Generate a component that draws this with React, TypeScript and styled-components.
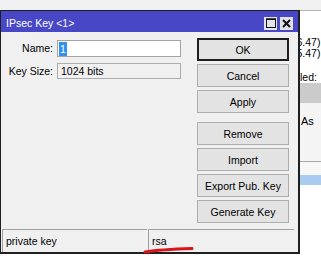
import React from 'react';
import styled, { createGlobalStyle } from 'styled-components';

const GlobalStyle = createGlobalStyle`
  html, body {
    margin: 0;
    padding: 0;
    background: #fff;
  }
  body {
    font-family: "Liberation Sans", Arial, sans-serif;
    font-size: 10.5px;
    color: #000;
  }
`;

const Desktop = styled.div`
  position: relative;
  width: 321px;
  height: 269px;
  overflow: hidden;
  background: #fff;
`;

// The main app behind the dialog, only its right edge shows
const BackApp = styled.div`
  display: flex;
  flex-direction: column;
`;

const BackToolbar = styled.div`
  height: 10px;
  background: #f0f0f0;
  border-bottom: 1px solid #b4b4b4;
`;

const BackLine = styled.div<{ $top?: number; $indent?: number }>`
  height: 11px;
  line-height: 11px;
  margin-top: ${(p) => p.$top ?? 0}px;
  padding-left: ${(p) => p.$indent ?? 293}px;
  white-space: nowrap;
`;

const BackHeader = styled.div`
  height: 20px;
  background: #cbcbcb;
`;

const BackGrid = styled.div`
  height: 59px;
  background: #f4f4f4;
  border-bottom: 1px solid #a8a8a8;
  padding-left: 301px;
  padding-top: 11px;
  box-sizing: border-box;
  line-height: 14px;
  font-size: 11px;
`;

const BackRow = styled.div<{ $selected?: boolean }>`
  height: ${(p) => (p.$selected ? 10 : 13)}px;
  background: ${(p) => (p.$selected ? '#a9cbef' : '#f7f7f7')};
`;

// Dialog window
const Dialog = styled.div`
  position: absolute;
  left: 0;
  top: 10px;
  width: 300px;
  height: 244px;
  box-sizing: border-box;
  border: 1px solid #1f1f1f;
  border-right-width: 2px;
  border-bottom-width: 2px;
  background: #f0f0f0;
  display: flex;
  flex-direction: column;
`;

const TitleBar = styled.div`
  height: 21px;
  box-sizing: border-box;
  padding: 3px 5px 0 5px;
  background: #4848c6;
  color: #fff;
  display: flex;
  align-items: center;
  font-size: 10.5px;
`;

const Title = styled.span`
  flex: 1;
`;

const TitleButtons = styled.div`
  display: flex;
  gap: 3px;
`;

const TitleButton = styled.div`
  width: 13px;
  height: 13px;
  background: #e2e2ea;
  display: flex;
  align-items: center;
  justify-content: center;
`;

const Body = styled.div`
  flex: 1;
  display: flex;
  padding: 6px 9px 0 0;
`;

const Form = styled.div`
  margin-top: 2px;
  display: grid;
  grid-template-columns: 52px 124px;
  grid-template-rows: 17px 16px;
  column-gap: 4px;
  row-gap: 6px;
  align-content: start;
`;

const Label = styled.div`
  text-align: right;
  line-height: 16px;
  white-space: nowrap;
`;

const Field = styled.div<{ $readOnly?: boolean }>`
  box-sizing: border-box;
  border: 1px solid ${(p) => (p.$readOnly ? '#acacac' : '#a3a3a3')};
  background: ${(p) => (p.$readOnly ? '#f0f0f0' : '#fff')};
  padding-left: ${(p) => (p.$readOnly ? 3 : 0)}px;
  display: flex;
  align-items: center;
  white-space: nowrap;
`;

const Selected = styled.span`
  display: inline-block;
  height: 14px;
  line-height: 14px;
  padding: 0 1px;
  margin-left: 1px;
  background: #3092f0;
  color: #fff;
`;

const Buttons = styled.div`
  margin-left: auto;
  width: 92px;
  display: flex;
  flex-direction: column;
  gap: 3px;
`;

const Button = styled.div<{ $default?: boolean; $spaced?: boolean }>`
  height: 23px;
  box-sizing: border-box;
  margin-top: ${(p) => (p.$spaced ? 6 : 0)}px;
  border: ${(p) => (p.$default ? '2px solid #1e1e1e' : '1px solid #adadad')};
  background: #e3e3e3;
  display: flex;
  align-items: center;
  justify-content: center;
  white-space: nowrap;
`;

const StatusBar = styled.div`
  height: 23px;
  display: flex;
  gap: 1px;
  padding: 0 4px 0 1px;
`;

const Pane = styled.div<{ $width?: number }>`
  ${(p) => (p.$width ? `width: ${p.$width}px;` : 'flex: 1;')}
  box-sizing: border-box;
  border-top: 1px solid #a0a0a0;
  border-left: 1px solid #a0a0a0;
  padding-left: 3px;
  display: flex;
  align-items: center;
`;

const Scribble = styled.svg`
  position: absolute;
  left: 140px;
  top: 244px;
`;

const actions = ['Remove', 'Import', 'Export Pub. Key', 'Generate Key'];

export default function App() {
  return (
    <>
      <GlobalStyle />
      <Desktop>
        <BackApp>
          <BackToolbar />
          <BackLine $top={26}>(6.47)</BackLine>
          <BackLine>(5.47):</BackLine>
          <BackLine $top={13} $indent={300}>led:</BackLine>
          <BackHeader />
          <BackGrid>As</BackGrid>
          <BackRow />
          <BackRow $selected />
        </BackApp>

        <Dialog>
          <TitleBar>
            <Title>IPsec Key &lt;1&gt;</Title>
            <TitleButtons>
              <TitleButton>
                <svg width="10" height="10" viewBox="0 0 10 10">
                  <rect x="0.5" y="1" width="9" height="8.5" fill="none" stroke="#111" strokeWidth="1" />
                  <rect x="0" y="0.5" width="10" height="1.5" fill="#111" />
                </svg>
              </TitleButton>
              <TitleButton>
                <svg width="9" height="9" viewBox="0 0 9 9">
                  <path d="M1 1 L8 8 M8 1 L1 8" stroke="#111" strokeWidth="2" />
                </svg>
              </TitleButton>
            </TitleButtons>
          </TitleBar>

          <Body>
            <Form>
              <Label>Name:</Label>
              <Field>
                <Selected>1</Selected>
              </Field>
              <Label>Key Size:</Label>
              <Field $readOnly>1024 bits</Field>
            </Form>

            <Buttons>
              <Button $default>OK</Button>
              <Button>Cancel</Button>
              <Button>Apply</Button>
              {actions.map((label, i) => (
                <Button key={label} $spaced={i === 0}>
                  {label}
                </Button>
              ))}
            </Buttons>
          </Body>

          <StatusBar>
            <Pane $width={145}>private key</Pane>
            <Pane>rsa</Pane>
          </StatusBar>
        </Dialog>

        <Scribble width="58" height="12" viewBox="0 0 58 12">
          <path d="M5 8 Q20 5.5 52 4.5" stroke="#d9141c" strokeWidth="3" fill="none" strokeLinecap="round" />
        </Scribble>
      </Desktop>
    </>
  );
}
